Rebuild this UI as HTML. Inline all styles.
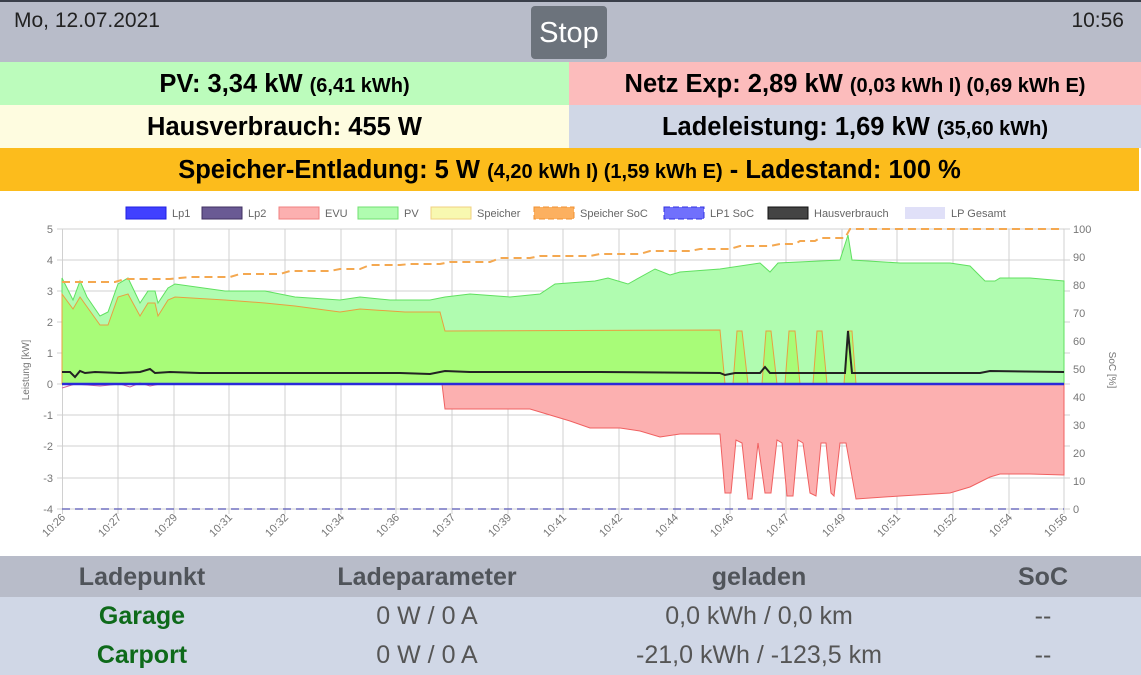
<!DOCTYPE html>
<html><head><meta charset="utf-8"><style>
*{margin:0;padding:0;box-sizing:border-box}
body{width:1141px;height:675px;overflow:hidden;background:#fff;font-family:"Liberation Sans",sans-serif;color:#000}
.top{position:absolute;left:0;top:0;width:1141px;height:62px;background:#b8bcc9;border-top:2px solid #3a3f4a}
.date{position:absolute;left:14px;top:7px;font-size:21px;color:#222}
.time{position:absolute;right:17px;top:7px;font-size:21px;color:#222}
.stop{position:absolute;left:531px;top:4px;width:76px;height:53px;background:#6c737c;border-radius:4px;color:#fff;font-size:29px;text-align:center;line-height:55px}
.row{position:absolute;height:43px;line-height:45px;text-align:center;font-weight:bold;font-size:25.5px;white-space:nowrap}
.row small{font-size:20px}
.th{position:absolute;top:556px;left:0;width:1141px;height:41px;background:#b8bcc9}
.tb{position:absolute;top:597px;left:0;width:1141px;height:78px;background:#d0d7e6}
.c{position:absolute;text-align:center;font-size:25px;white-space:nowrap}
</style></head><body>
<div class="top"><div class="date">Mo, 12.07.2021</div><div class="stop">Stop</div><div class="time">10:56</div></div>
<div class="row" style="left:0;top:62px;width:569px;background:#bcfcbc">PV: 3,34 kW <small>(6,41 kWh)</small></div>
<div class="row" style="left:569px;top:62px;width:572px;background:#fcbcbc">Netz Exp: 2,89 kW <small>(0,03 kWh I) (0,69 kWh E)</small></div>
<div class="row" style="left:0;top:105px;width:569px;background:#fefce0">Hausverbrauch: 455 W</div>
<div class="row" style="left:569px;top:105px;width:572px;background:#d0d7e6">Ladeleistung: 1,69 kW <small>(35,60 kWh)</small></div>
<div class="row" style="left:0;top:148px;width:1139px;background:#fcbc1c">Speicher-Entladung: 5 W <small>(4,20 kWh I) (1,59 kWh E)</small> - Ladestand: 100 %</div>

<svg style="position:absolute;left:0;top:191px" width="1141" height="365" viewBox="0 191 1141 365" font-family="Liberation Sans,sans-serif">
<g font-size="11" fill="#666">
<rect x="126" y="207" width="40" height="12" fill="#4040ff" stroke="#2020e0"/><text x="172" y="217">Lp1</text>
<rect x="202" y="207" width="40" height="12" fill="#6a5a94" stroke="#403060"/><text x="248" y="217">Lp2</text>
<rect x="279" y="207" width="40" height="12" fill="#fcb0b0" stroke="#f08080"/><text x="325" y="217">EVU</text>
<rect x="358" y="207" width="40" height="12" fill="#b0fcb0" stroke="#70e070"/><text x="404" y="217">PV</text>
<rect x="431" y="207" width="40" height="12" fill="#f8f8b0" stroke="#f0d080"/><text x="477" y="217">Speicher</text>
<rect x="534" y="207" width="40" height="12" fill="#fcb060" stroke="#f09030" stroke-dasharray="6,3"/><text x="580" y="217">Speicher SoC</text>
<rect x="664" y="207" width="40" height="12" fill="#7070fc" stroke="#3030e0" stroke-dasharray="6,3"/><text x="710" y="217">LP1 SoC</text>
<rect x="768" y="207" width="40" height="12" fill="#444" stroke="#111"/><text x="814" y="217">Hausverbrauch</text>
<rect x="905" y="207" width="40" height="12" fill="#e0e0f8"/><text x="951" y="217">LP Gesamt</text>
</g>
<g stroke="#d0d0d0" stroke-width="1">
<line x1="57" y1="229" x2="1070" y2="229"/><line x1="57" y1="260" x2="1070" y2="260"/><line x1="57" y1="291" x2="1070" y2="291"/><line x1="57" y1="322" x2="1070" y2="322"/><line x1="57" y1="353" x2="1070" y2="353"/><line x1="57" y1="384" x2="1070" y2="384"/><line x1="57" y1="415" x2="1070" y2="415"/><line x1="57" y1="446" x2="1070" y2="446"/><line x1="57" y1="478" x2="1070" y2="478"/><line x1="57" y1="509" x2="1070" y2="509"/>
<line x1="62.5" y1="229" x2="62.5" y2="514"/><line x1="118" y1="229" x2="118" y2="514"/><line x1="174" y1="229" x2="174" y2="514"/><line x1="229" y1="229" x2="229" y2="514"/><line x1="285" y1="229" x2="285" y2="514"/><line x1="341" y1="229" x2="341" y2="514"/><line x1="396" y1="229" x2="396" y2="514"/><line x1="452" y1="229" x2="452" y2="514"/><line x1="508" y1="229" x2="508" y2="514"/><line x1="563" y1="229" x2="563" y2="514"/><line x1="619" y1="229" x2="619" y2="514"/><line x1="675" y1="229" x2="675" y2="514"/><line x1="730" y1="229" x2="730" y2="514"/><line x1="786" y1="229" x2="786" y2="514"/><line x1="842" y1="229" x2="842" y2="514"/><line x1="897" y1="229" x2="897" y2="514"/><line x1="953" y1="229" x2="953" y2="514"/><line x1="1009" y1="229" x2="1009" y2="514"/><line x1="1064" y1="229" x2="1064" y2="514"/>
</g>
<path d="M62,278 L73,300 80,281 87,297 100,316 108,312 118,284 128,278 140,303 148,291 155,291 158,303 168,288 175,284 225,291 265,291 295,297 340,300 360,297 390,300 430,300 445,297 470,294 510,297 540,294 555,284 595,281 608,278 628,284 655,269 670,275 680,272 720,269 760,263 770,272 778,263 840,260 848,235 852,260 900,263 950,263 970,266 985,281 995,281 1000,278 1030,278 1064,281 L1064,384 L62,384Z" fill="#b0fcb0" stroke="#60e060" stroke-width="1"/>
<path d="M62,294 L73,309 80,297 100,325 108,325 118,297 128,294 140,316 148,303 155,303 158,316 168,300 175,297 225,300 265,303 295,306 340,312 360,309 405,312 440,312 445,331 720,330 725,384 733,384 737,331 742,331 748,384 762,384 766,331 771,331 777,384 785,384 789,331 795,331 800,384 813,384 817,331 822,331 827,384 844,384 848,331 852,331 856,384 L62,384Z" fill="#a8fc78" stroke="#e8a040" stroke-width="1"/>
<path d="M442,384 L445,409 480,409 530,409 550,415 570,421 590,428 620,428 640,431 660,437 680,434 720,434 725,493 731,493 736,440 742,443 748,499 752,499 758,443 765,493 771,493 777,440 782,443 787,496 793,496 798,440 803,443 810,493 816,496 821,443 826,443 831,493 834,496 840,443 846,443 856,499 900,496 950,493 970,487 990,477 1000,474 1030,474 1064,475 L1064,384Z" fill="#fcb0b0" stroke="#f06060" stroke-width="1"/>
<path d="M62,388 L75,384 100,386 120,384 130,387 140,383 150,386 160,384" fill="none" stroke="#d060a0" stroke-width="1"/>
<line x1="62" y1="384" x2="1064" y2="384" stroke="#2a2ad8" stroke-width="2.5"/>
<path d="M62,372 L70,372 75,377 80,371 85,373 95,372 120,373 140,372 150,369 155,373 170,372 200,373 300,373 400,373 430,374 445,371 470,372 600,372 720,373 725,375 735,373 760,373 765,367 770,373 840,373 845,373 848,331 852,373 900,373 980,373 990,371 1064,372" fill="none" stroke="#222" stroke-width="2"/>
<path d="M62,282 L115,282 125,279 170,279 190,277 230,277 240,274 280,274 290,271 330,271 340,269 360,269 370,265 400,265 410,264 440,264 450,262 490,262 500,258 530,258 540,256 590,256 600,254 640,254 650,251 690,251 700,249 730,249 740,246 770,246 780,244 795,244 800,241 815,241 820,238 845,238 850,229 1064,229" fill="none" stroke="#f4a850" stroke-width="2" stroke-dasharray="8,5"/>
<line x1="62" y1="509" x2="1064" y2="509" stroke="#7070c0" stroke-width="1.5" stroke-dasharray="8,5"/>
<g font-size="11" fill="#777" text-anchor="end">
<text x="53" y="233">5</text><text x="53" y="264">4</text><text x="53" y="295">3</text><text x="53" y="326">2</text><text x="53" y="357">1</text><text x="53" y="388">0</text><text x="53" y="419">-1</text><text x="53" y="450">-2</text><text x="53" y="482">-3</text><text x="53" y="513">-4</text>
</g>
<g font-size="11" fill="#777">
<text x="1073" y="233">100</text><text x="1073" y="261">90</text><text x="1073" y="289">80</text><text x="1073" y="317">70</text><text x="1073" y="345">60</text><text x="1073" y="373">50</text><text x="1073" y="401">40</text><text x="1073" y="429">30</text><text x="1073" y="457">20</text><text x="1073" y="485">10</text><text x="1073" y="513">0</text>
</g>
<text transform="translate(29,370) rotate(-90)" font-size="10" fill="#777" text-anchor="middle">Leistung [kW]</text>
<text transform="translate(1109,370) rotate(90)" font-size="10" fill="#777" text-anchor="middle">SoC [%]</text>
<g font-size="11" fill="#777" text-anchor="end">
<text transform="translate(66,518) rotate(-45)">10:26</text><text transform="translate(122,518) rotate(-45)">10:27</text><text transform="translate(178,518) rotate(-45)">10:29</text><text transform="translate(233,518) rotate(-45)">10:31</text><text transform="translate(289,518) rotate(-45)">10:32</text><text transform="translate(345,518) rotate(-45)">10:34</text><text transform="translate(400,518) rotate(-45)">10:36</text><text transform="translate(456,518) rotate(-45)">10:37</text><text transform="translate(512,518) rotate(-45)">10:39</text><text transform="translate(567,518) rotate(-45)">10:41</text><text transform="translate(623,518) rotate(-45)">10:42</text><text transform="translate(679,518) rotate(-45)">10:44</text><text transform="translate(734,518) rotate(-45)">10:46</text><text transform="translate(790,518) rotate(-45)">10:47</text><text transform="translate(846,518) rotate(-45)">10:49</text><text transform="translate(901,518) rotate(-45)">10:51</text><text transform="translate(957,518) rotate(-45)">10:52</text><text transform="translate(1013,518) rotate(-45)">10:54</text><text transform="translate(1068,518) rotate(-45)">10:56</text>
</g>
</svg>

<div class="th"></div><div class="tb"></div>
<div class="c" style="left:42px;width:200px;top:563px;font-weight:bold;color:#50545a">Ladepunkt</div>
<div class="c" style="left:327px;width:200px;top:563px;font-weight:bold;color:#50545a">Ladeparameter</div>
<div class="c" style="left:659px;width:200px;top:563px;font-weight:bold;color:#50545a">geladen</div>
<div class="c" style="left:943px;width:200px;top:563px;font-weight:bold;color:#50545a">SoC</div>
<div class="c" style="left:42px;width:200px;top:602px;font-weight:bold;color:#0e6a1a">Garage</div>
<div class="c" style="left:42px;width:200px;top:641px;font-weight:bold;color:#0e6a1a">Carport</div>
<div class="c" style="left:327px;width:200px;top:602px;color:#555">0 W / 0 A</div>
<div class="c" style="left:327px;width:200px;top:641px;color:#555">0 W / 0 A</div>
<div class="c" style="left:609px;width:300px;top:602px;color:#555">0,0 kWh / 0,0 km</div>
<div class="c" style="left:609px;width:300px;top:641px;color:#555">-21,0 kWh / -123,5 km</div>
<div class="c" style="left:943px;width:200px;top:602px;color:#555">--</div>
<div class="c" style="left:943px;width:200px;top:641px;color:#555">--</div>
</body></html>
